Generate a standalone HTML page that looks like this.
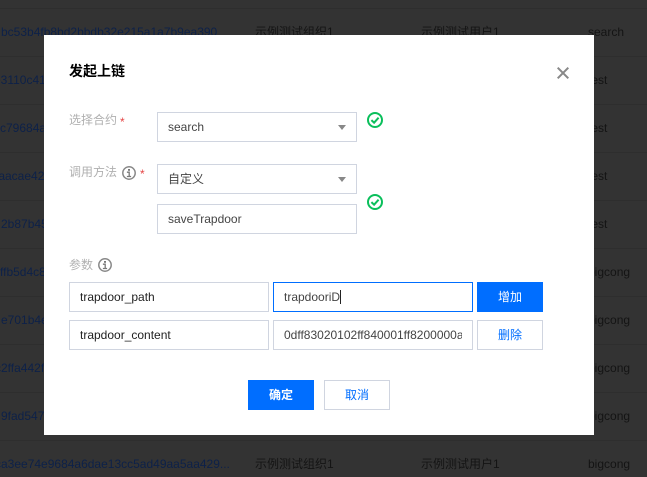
<!DOCTYPE html>
<html>
<head>
<meta charset="utf-8">
<style>
html,body{margin:0;padding:0;width:647px;height:477px;overflow:hidden;background:#333;}
body{position:relative;font-family:"Liberation Sans","Noto Sans CJK SC",sans-serif;font-size:12px;}
.a{position:absolute;white-space:nowrap;}
.ln{position:absolute;left:0;width:647px;height:1px;background:#2e2e2e;}
.t{position:absolute;white-space:nowrap;line-height:16px;color:#141414;}
.h{position:absolute;white-space:nowrap;line-height:16px;color:#0d2149;}
#m{position:absolute;left:44px;top:35px;width:550px;height:400px;background:#fff;}
.box{position:absolute;box-sizing:border-box;width:200px;height:30px;border:1px solid #d0d5e0;background:#fff;color:#444;line-height:28px;padding-left:10px;white-space:nowrap;overflow:hidden;}
.lb{position:absolute;white-space:nowrap;color:#b0b0b0;line-height:16px;}
.st{position:absolute;color:#e54545;line-height:16px;}
.ar{position:absolute;width:0;height:0;border-left:4.5px solid transparent;border-right:4.5px solid transparent;border-top:5px solid #888;}
.btn{position:absolute;box-sizing:border-box;width:66px;height:30px;text-align:center;line-height:30px;white-space:nowrap;}
.pri{background:#006eff;color:#fff;}
.sec{background:#fff;color:#006eff;border:1px solid #d0d5e0;line-height:28px;}
svg{position:absolute;display:block;}
</style>
</head>
<body>
<div class="ln" style="top:8px"></div><div class="ln" style="top:56px"></div><div class="ln" style="top:104px"></div><div class="ln" style="top:152px"></div><div class="ln" style="top:200px"></div><div class="ln" style="top:248px"></div><div class="ln" style="top:296px"></div><div class="ln" style="top:344px"></div><div class="ln" style="top:392px"></div><div class="ln" style="top:440px"></div>

<div class="h" style="left:1px;top:24px">bc53b4fb8bd2bbdb32e215a1a7b9ea390</div>
<div class="h" style="left:-6px;top:72px">e3110c41</div>
<div class="h" style="left:0;top:120px">c79684a</div>
<div class="h" style="left:-5px;top:168px">faacae42</div>
<div class="h" style="left:1px;top:216px">2b87b45</div>
<div class="h" style="left:0;top:264px">ffb5d4c8</div>
<div class="h" style="left:1px;top:312px">e701b4e</div>
<div class="h" style="left:-5px;top:360px">c2ffa442f</div>
<div class="h" style="left:1px;top:408px">9fad5471</div>
<div class="h" style="left:-5px;top:456px">ca3ee74e9684a6dae13cc5ad49aa5aa429...</div>

<div class="t" style="left:255px;top:24px">示例测试组织1</div>
<div class="t" style="left:421px;top:24px">示例测试用户1</div>
<div class="t" style="left:588px;top:24px">search</div>
<div class="t" style="left:255px;top:456px">示例测试组织1</div>
<div class="t" style="left:421px;top:456px">示例测试用户1</div>
<div class="t" style="left:588px;top:456px">bigcong</div>
<div class="t" style="left:588px;top:72px">test</div>
<div class="t" style="left:588px;top:120px">test</div>
<div class="t" style="left:588px;top:168px">test</div>
<div class="t" style="left:588px;top:216px">test</div>
<div class="t" style="left:588px;top:264px">bigcong</div>
<div class="t" style="left:588px;top:312px">bigcong</div>
<div class="t" style="left:588px;top:360px">bigcong</div>
<div class="t" style="left:588px;top:408px">bigcong</div>

<div id="m">
  <div class="a" style="left:25px;top:28px;font-size:14px;font-weight:bold;color:#000;line-height:16px">发起上链</div>
  <svg style="left:513px;top:32px" width="12" height="12" viewBox="0 0 12 12"><path d="M0.7 0.7L11.3 11.3M11.3 0.7L0.7 11.3" stroke="#888" stroke-width="2" fill="none"/></svg>

  <div class="lb" style="left:25px;top:77px">选择合约</div>
  <div class="st" style="left:76px;top:79px">*</div>
  <div class="box" style="left:113px;top:77px;line-height:29px">search</div>
  <div class="ar" style="left:294px;top:90px"></div>
  <svg style="left:323px;top:77px" width="16" height="16" viewBox="0 0 16 16"><circle cx="8" cy="8" r="7" fill="none" stroke="#0abf5b" stroke-width="2"/><path d="M4.4 8.1L7.1 10.7L11.6 5.7" fill="none" stroke="#0abf5b" stroke-width="2"/></svg>

  <div class="lb" style="left:25px;top:129px">调用方法</div>
  <svg style="left:78px;top:131px" width="14" height="14" viewBox="0 0 14 14"><circle cx="7" cy="7" r="6.2" fill="none" stroke="#888" stroke-width="1.5"/><rect x="6" y="3" width="2" height="1.8" fill="#777"/><path d="M4.9 6.2H7.2V10.2M4.9 10.5H9.1" fill="none" stroke="#777" stroke-width="1.3"/></svg>
  <div class="st" style="left:96px;top:131px">*</div>
  <div class="box" style="left:113px;top:129px;line-height:29px">自定义</div>
  <div class="ar" style="left:294px;top:142px"></div>
  <div class="box" style="left:113px;top:169px">saveTrapdoor</div>
  <svg style="left:323px;top:159px" width="16" height="16" viewBox="0 0 16 16"><circle cx="8" cy="8" r="7" fill="none" stroke="#0abf5b" stroke-width="2"/><path d="M4.4 8.1L7.1 10.7L11.6 5.7" fill="none" stroke="#0abf5b" stroke-width="2"/></svg>

  <div class="lb" style="left:25px;top:222px">参数</div>
  <svg style="left:54px;top:223px" width="14" height="14" viewBox="0 0 14 14"><circle cx="7" cy="7" r="6.2" fill="none" stroke="#888" stroke-width="1.5"/><rect x="6" y="3" width="2" height="1.8" fill="#777"/><path d="M4.9 6.2H7.2V10.2M4.9 10.5H9.1" fill="none" stroke="#777" stroke-width="1.3"/></svg>

  <div class="box" style="left:25px;top:247px;color:#222">trapdoor_path</div>
  <div class="box" style="left:229px;top:247px;border-color:#006eff">trapdooriD<span style="display:inline-block;width:1px;height:14px;background:#222;vertical-align:-3px"></span></div>
  <div class="btn pri" style="left:433px;top:247px">增加</div>

  <div class="box" style="left:25px;top:285px;color:#222">trapdoor_content</div>
  <div class="box" style="left:229px;top:285px;padding-right:10px"><span style="display:block;overflow:hidden;width:178px">0dff83020102ff840001ff8200000a</span></div>
  <div class="btn sec" style="left:433px;top:285px">删除</div>

  <div class="btn pri" style="left:204px;top:345px;font-weight:bold">确定</div>
  <div class="btn sec" style="left:280px;top:345px">取消</div>
</div>
</body>
</html>
